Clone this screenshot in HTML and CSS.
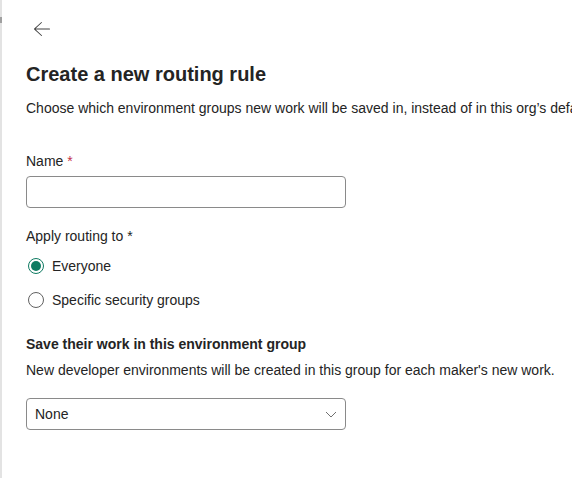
FILE: index.html
```html
<!doctype html>
<html>
  <head>
    <title>Create a new routing rule</title>
    <link rel="stylesheet" href="styles.css">
  </head>
  <body>
    <div class="edge"><span class="edge-mark"></span></div>
    <div class="panel">
      <button class="back-btn" aria-label="Back">
        <svg width="20" height="20" viewBox="0 0 20 20">
          <path d="M9.16 16.87a.5.5 0 1 0 .67-.74L3.67 10.5H17.5a.5.5 0 0 0 0-1H3.67l6.16-5.63a.5.5 0 0 0-.67-.74L2.24 9.44a.75.75 0 0 0 0 1.11l6.92 6.32Z" fill="#424242"/>
        </svg>
      </button>

      <h1 class="title">Create a new routing rule</h1>
      <div class="intro">
        Choose which environment groups new work will be saved in, instead of in this org’s default environment.
      </div>

      <div class="field">
        <label class="field-label">Name <span class="req">*</span></label>
        <input class="text-input" type="text" />
      </div>

      <div class="field">
        <div class="field-label">Apply routing to *</div>
        <div class="radio-list">
          <label class="radio-option">
            <span class="radio checked"></span>
            <span>Everyone</span>
          </label>
          <label class="radio-option">
            <span class="radio"></span>
            <span>Specific security groups</span>
          </label>
        </div>
      </div>

      <div class="section">
        <div class="section-title">Save their work in this environment group</div>
        <div class="section-hint">
          New developer environments will be created in this group for each maker's new work.
        </div>
        <div class="dropdown">
          <span>None</span>
          <svg width="12" height="12" viewBox="0 0 12 12">
            <path d="M1 4l5 5 5-5" fill="none" stroke="#707070" stroke-width="1"/>
          </svg>
        </div>
      </div>
    </div>
  </body>
</html>
```

FILE: styles.css
```css
:root {
  --text: #242424;
  --border: #8a8a8a;
  --edge: #e3e3e3;
  --brand: #0f7b62;
  --required: #c4314b;
}

body {
  font-family: 'Liberation Sans', Arial, sans-serif;
  font-size: 14px;
  color: var(--text);
  margin: 0;
  background: #ffffff;
  display: flex;
  height: 478px;
  overflow: hidden;
}

.edge {
  width: 2px;
  flex-shrink: 0;
  background: var(--edge);
  position: relative;
}

.edge-mark {
  position: absolute;
  top: 17px;
  left: 0;
  width: 2px;
  height: 6px;
  background: #a0a0a0;
}

.panel {
  padding: 19px 0 0 24px;
  white-space: nowrap;
  overflow: hidden;
  min-width: 0;
}

.back-btn {
  border: none;
  background: none;
  padding: 0;
  margin-left: 6px;
  width: 20px;
  height: 20px;
  display: block;
  cursor: pointer;
}

.title {
  font-size: 20px;
  font-weight: 600;
  margin: 21px 0 0;
  line-height: 28px;
}

.intro {
  margin-top: 10px;
  line-height: 20px;
}

.field {
  margin-top: 33px;
}

.field + .field {
  margin-top: 18px;
}

.field-label {
  display: block;
  line-height: 20px;
  margin-bottom: 5px;
}

.req {
  color: var(--required);
}

.text-input {
  display: block;
  width: 320px;
  height: 32px;
  box-sizing: border-box;
  border: 1px solid var(--border);
  border-radius: 4px;
  font: inherit;
  padding: 0 8px;
}

.radio-list {
  display: flex;
  flex-direction: column;
  gap: 14px;
  margin-top: 10px;
}

.radio-option {
  display: flex;
  align-items: center;
  gap: 8px;
  line-height: 20px;
  margin-left: 2px;
}

.radio {
  width: 16px;
  height: 16px;
  box-sizing: border-box;
  border: 1px solid #616161;
  border-radius: 50%;
  position: relative;
}

.radio.checked {
  border-color: var(--brand);
}

.radio.checked::after {
  content: '';
  position: absolute;
  left: 2px;
  top: 2px;
  width: 10px;
  height: 10px;
  border-radius: 50%;
  background: var(--brand);
}

.section {
  margin-top: 24px;
}

.section-title {
  font-weight: 600;
  line-height: 20px;
}

.section-hint {
  margin-top: 6px;
  line-height: 20px;
}

.dropdown {
  margin-top: 18px;
  width: 320px;
  height: 32px;
  box-sizing: border-box;
  border: 1px solid var(--border);
  border-radius: 4px;
  display: flex;
  align-items: center;
  justify-content: space-between;
  padding: 0 8px 0 8px;
}
```
